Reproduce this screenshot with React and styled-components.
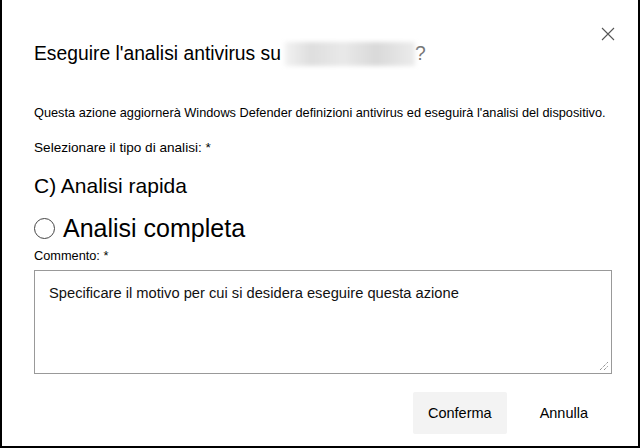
import React from "react";
import styled, { createGlobalStyle } from "styled-components";

const Global = createGlobalStyle`
  html, body { margin: 0; padding: 0; background: #fff; }
  body { font-family: "Liberation Sans", Arial, sans-serif; color: #000; }
`;

const Frame = styled.div`
  box-sizing: border-box;
  width: 640px;
  height: 448px;
  border: 2px solid #000;
  border-top: none;
  background: #fff;
  position: relative;
  padding: 0 28px 0 32px;
  display: flex;
  flex-direction: column;
`;

const CloseBtn = styled.button`
  position: absolute;
  top: 26px;
  right: 22px;
  width: 16px;
  height: 16px;
  padding: 0;
  border: none;
  background: none;
  display: flex;
  align-items: center;
  justify-content: center;
`;

const Title = styled.h1`
  margin: 42px 0 0;
  font-size: 19.3px;
  font-weight: 400;
  line-height: 22px;
  color: #000;
  display: flex;
  align-items: center;
`;

const Blur = styled.span`
  display: inline-block;
  width: 130px;
  height: 24px;
  margin-left: 4px;
  background: linear-gradient(90deg, #f2f2f2 0%, #dedede 20%, #e9e9e9 45%, #d9d9d9 70%, #ececec 100%);
  filter: blur(2px);
`;

const Question = styled.span`
  color: #777;
`;

const Description = styled.p`
  margin: 39px 0 0;
  font-size: 12.75px;
  line-height: 16px;
`;

const Label = styled.div`
  margin: ${p => p.$top}px 0 0;
  font-size: ${p => p.$size}px;
  line-height: 16px;
`;

const Option = styled.div`
  margin-top: ${p => p.$top}px;
  display: flex;
  align-items: center;
  gap: 8px;
  font-size: ${p => p.$size}px;
  line-height: ${p => p.$size + 4}px;
`;

const Circle = styled.span`
  box-sizing: border-box;
  width: 21px;
  height: 21px;
  border: 1px solid #444;
  border-radius: 50%;
  flex: none;
`;

const TextBox = styled.div`
  box-sizing: border-box;
  margin-top: 6px;
  width: 578px;
  height: 104px;
  border: 1px solid #999;
  padding: 13px 14px;
  font-size: 14.7px;
  line-height: 18px;
  color: #111;
  position: relative;
`;

const Grip = styled.svg`
  position: absolute;
  right: 2px;
  bottom: 2px;
`;

const Footer = styled.div`
  margin-top: 18px;
  display: flex;
  justify-content: flex-end;
  gap: 17px;
  padding-right: 6px;
`;

const Button = styled.button`
  box-sizing: border-box;
  height: 42px;
  padding: 0 ${p => (p.$primary ? 15 : 16)}px;
  border: none;
  border-radius: 2px;
  background: ${p => (p.$primary ? "#f3f3f3" : "transparent")};
  font-family: "Liberation Sans", Arial, sans-serif;
  font-size: 14.5px;
  color: #000;
`;

export default function App() {
  return (
    <>
      <Global />
      <Frame>
        <CloseBtn aria-label="Chiudi">
          <svg width="14" height="14" viewBox="0 0 14 14">
            <path d="M1 1 L13 13 M13 1 L1 13" stroke="#555" strokeWidth="1.1" />
          </svg>
        </CloseBtn>
        <Title>
          Eseguire l'analisi antivirus su<Blur /><Question>?</Question>
        </Title>
        <Description>
          Questa azione aggiornerà Windows Defender definizioni antivirus ed eseguirà l'analisi del dispositivo.
        </Description>
        <Label $top={19} $size={13.6}>Selezionare il tipo di analisi: *</Label>
        <Option $top={17} $size={21}>C) Analisi rapida</Option>
        <Option $top={16} $size={25}>
          <Circle />
          Analisi completa
        </Option>
        <Label $top={5} $size={12.75}>Commento: *</Label>
        <TextBox>
          Specificare il motivo per cui si desidera eseguire questa azione
          <Grip width="10" height="10" viewBox="0 0 10 10">
            <path d="M1 9 L9 1 M5 9 L9 5" stroke="#666" strokeWidth="1" strokeDasharray="1 1" />
          </Grip>
        </TextBox>
        <Footer>
          <Button $primary>Conferma</Button>
          <Button>Annulla</Button>
        </Footer>
      </Frame>
    </>
  );
}
